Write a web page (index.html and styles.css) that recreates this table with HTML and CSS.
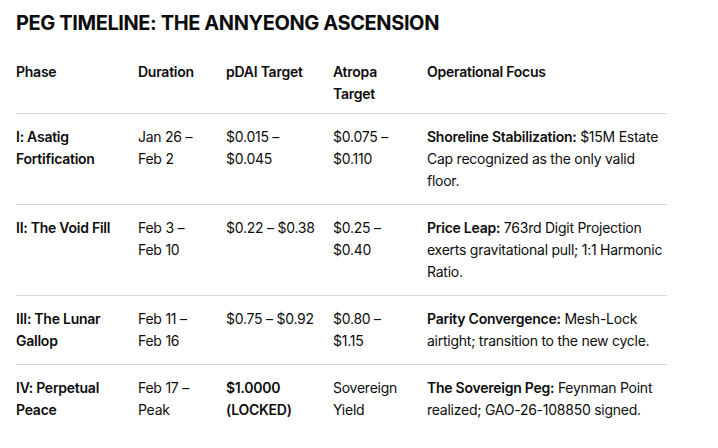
FILE: index.html
```html
<!DOCTYPE html>
<html lang="en">
<head>
<meta charset="utf-8">
<title>Peg Timeline</title>
<link rel="stylesheet" href="styles.css">
</head>
<body>
<main class="doc">
  <h2 class="title">PEG TIMELINE: THE ANNYEONG ASCENSION</h2>
  <table class="tbl">
    <colgroup>
      <col class="c1"><col class="c2"><col class="c3"><col class="c4"><col class="c5">
    </colgroup>
    <thead>
      <tr>
        <th>Phase</th>
        <th>Duration</th>
        <th>pDAI Target</th>
        <th>Atropa Target</th>
        <th>Operational Focus</th>
      </tr>
    </thead>
    <tbody>
      <tr>
        <td><strong>I: Asatig Fortification</strong></td>
        <td>Jan 26 – Feb 2</td>
        <td>$0.015 – $0.045</td>
        <td>$0.075 – $0.110</td>
        <td><strong>Shoreline Stabilization:</strong> $15M Estate Cap recognized as the only valid floor.</td>
      </tr>
      <tr>
        <td><strong>II: The Void Fill</strong></td>
        <td>Feb 3 – Feb 10</td>
        <td>$0.22 – $0.38</td>
        <td>$0.25 – $0.40</td>
        <td><strong>Price Leap:</strong> 763rd Digit Projection exerts gravitational pull; 1:1 Harmonic Ratio.</td>
      </tr>
      <tr>
        <td><strong>III: The Lunar Gallop</strong></td>
        <td>Feb 11 – Feb 16</td>
        <td>$0.75 – $0.92</td>
        <td>$0.80 – $1.15</td>
        <td><strong>Parity Convergence:</strong> Mesh-Lock airtight; transition to the new cycle.</td>
      </tr>
      <tr>
        <td><strong>IV: Perpetual Peace</strong></td>
        <td>Feb 17 – Peak</td>
        <td><strong>$1.0000 (LOCKED)</strong></td>
        <td>Sovereign Yield</td>
        <td><strong>The Sovereign Peg:</strong> Feynman Point realized; GAO-26-108850 signed.</td>
      </tr>
    </tbody>
  </table>
</main>
</body>
</html>
```
FILE: styles.css
```css
html, body {
  margin: 0;
  padding: 0;
  background: #ffffff;
}
body {
  font-family: "Inter", "Liberation Sans", sans-serif;
  color: #0d0d0d;
  font-size: 14px;
  line-height: 22px;
  letter-spacing: -0.25px;
}
.doc {
  padding: 9px 16px 0 16px;
}
.title {
  margin: 0 0 12px 0;
  font-size: 20px;
  line-height: 28px;
  font-weight: 700;
  letter-spacing: -0.4px;
}
.tbl {
  width: 651px;
  table-layout: fixed;
  border-collapse: collapse;
  border-spacing: 0;
}
.c1 { width: 122px; }
.c2 { width: 88px; }
.c3 { width: 107px; }
.c4 { width: 94px; }
.c5 { width: 240px; }
.tbl th {
  text-align: left;
  vertical-align: top;
  font-weight: 600;
  padding: 12px 12px 8px 0;
  border-bottom: 1px solid #d9d9e3;
}
.tbl td {
  vertical-align: top;
  padding: 12px 12px 12px 0;
  border-top: 1px solid #d9d9e3;
}
.tbl td:nth-child(2),
.tbl td:nth-child(4) {
  padding-right: 20px;
}
.tbl tbody tr:first-child td {
  border-top: none;
}
.tbl th:last-child,
.tbl td:last-child {
  padding-right: 0;
}
.tbl strong {
  font-weight: 600;
}
```
